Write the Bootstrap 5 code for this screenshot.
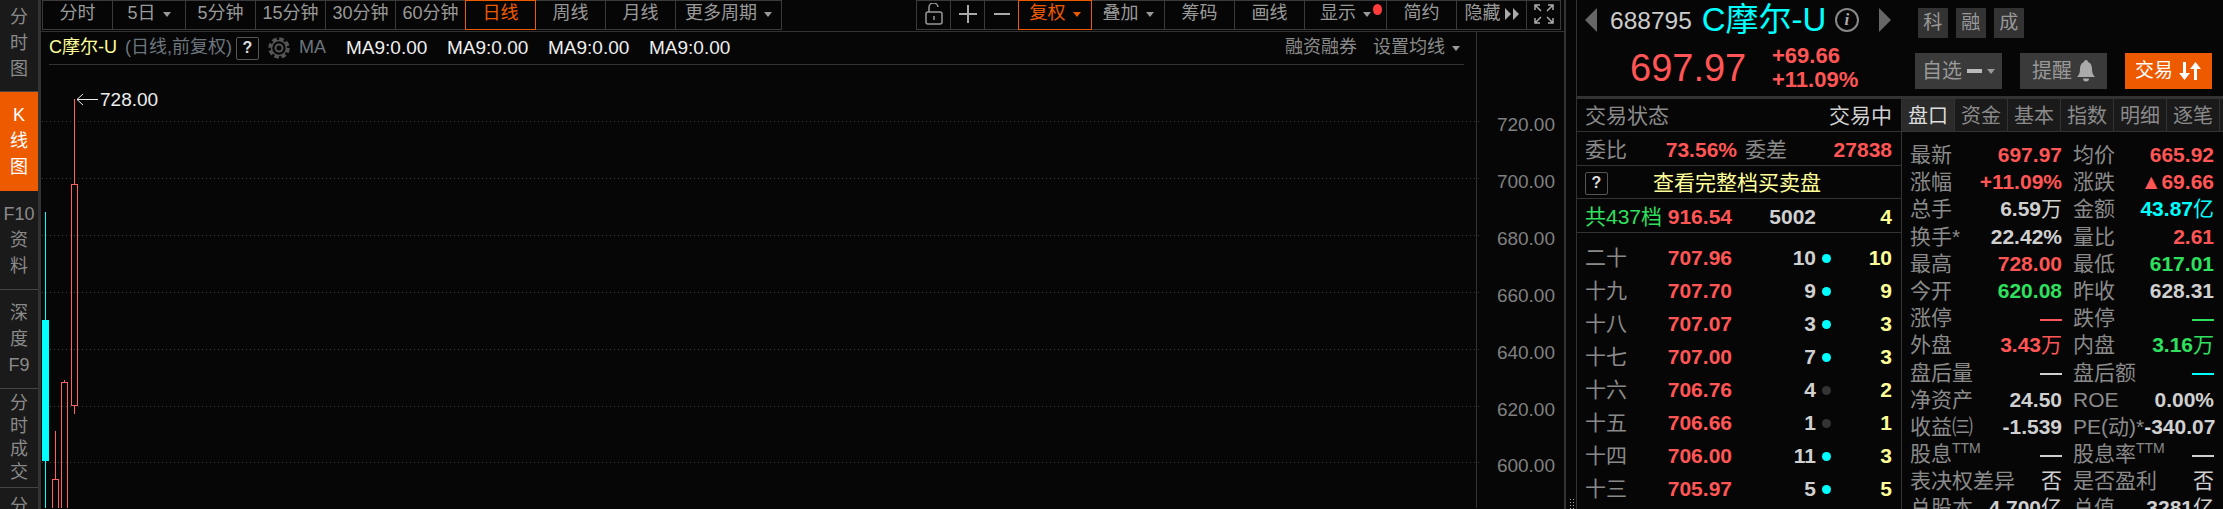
<!DOCTYPE html>
<html lang="zh-CN">
<head>
    <meta charset="UTF-8">
    <meta name="viewport" content="width=device-width, initial-scale=1.0">
    <title>C摩尔-U 688795</title>
    <link href="https://cdn.jsdelivr.net/npm/bootstrap@5.3.0/dist/css/bootstrap.min.css" rel="stylesheet">
    <style>
        html, body { height: 509px; overflow: hidden; }
        body {
            background-color: #060606;
            color: #8a8a8a;
            font-family: "Liberation Sans", "Noto Sans CJK SC", sans-serif;
            font-size: 20px;
            line-height: 1.2;
        }
        .up { color: #ff5555; }
        .down { color: #2fe05f; }
        .cyan { color: #00ffff; }
        .pale { color: #d0d0d0; }
        .yellow { color: #ffff99; }
        .num { font-weight: 700; }
        .unit { font-weight: 400; }

        /* left rail */
        .rail { width: 41px; height: 509px; background: #1a1a1a; border-right: 3px solid #333; flex: none; overflow: hidden; }
        .rail-tab {
            height: 99px; width: 38px; border-bottom: 1px solid #444; flex: none;
            font-size: 18px; line-height: 26px; text-align: center;
        }
        .rail-tab.first { height: 92px; padding-bottom: 6px; }
        .rail-tab.tight { line-height: 23px; }
        .rail-tab.on { background: #ee5a00; color: #fff; border-bottom-color: #ee5a00; }
        .rail-tab.cut { height: 21px; border-bottom: 0; padding-top: 6px; line-height: 24px; }

        /* toolbar */
        .main-col { width: 1523px; flex: none; }
        .tools { height: 32px; padding-left: 1px; border-bottom: 1px solid #333; }
        .tool {
            width: 71px; height: 30px; border: 1px solid #3a3a3a; margin-right: -1px;
            font-size: 18px; color: #999; white-space: nowrap; background: none; padding: 0 0 2px;
            position: relative;
        }
        .tool.wide { width: 74px; }
        .tool.wider { width: 83px; }
        .tool.widest { width: 107px; }
        .tool.slim { width: 35px; }
        .tool.on { border-color: #ee5a00; color: #ee5a00; z-index: 1; }
        .caret-d {
            display: inline-block; width: 0; height: 0; margin-left: 7px;
            border-left: 4px solid transparent; border-right: 4px solid transparent; border-top: 5px solid #999;
        }
        .on .caret-d { border-top-color: #ee5a00; }
        .red-dot { position: absolute; top: 3px; right: 4px; width: 9px; height: 11px; border-radius: 50%; background: #ff3b3b; }

        /* legend */
        .legend-wrap { width: 1436px; border-right: 1px solid #333; }
        .legend {
            height: 33px; margin: 0 12px 0 8px; border-bottom: 1px solid #333;
            font-size: 18px; white-space: nowrap;
        }
        .qmark {
            display: inline-flex; align-items: center; justify-content: center;
            width: 23px; height: 23px; border: 1px solid #555; border-radius: 2px;
            color: #ddd; font-weight: 700; font-size: 16px;
        }
        .ma-label { margin: 0 20px 0 8px; }
        .ma-item { color: #eee; width: 101px; font-size: 19px; padding-top: 1px; }
        .chart { display: block; }
        .chart text { font-family: "Liberation Sans", sans-serif; font-size: 19px; }

        /* splitter */
        .splitter { width: 12px; height: 509px; border-left: 2px solid #333; flex: none; padding: 498px 0 0 3px; }
        .grip { width: 7px; height: 11px; background-image: radial-gradient(#aaa 1px, transparent 1px); background-size: 3px 3px; }

        /* right panel */
        .panel { width: 647px; height: 509px; border-left: 1px solid #333; flex: none; overflow: hidden; font-size: 21px; }
        .head { height: 102px; border-bottom: 3px solid #333; padding-left: 8px; }
        .head-top { height: 46px; }
        .tri-l { width: 0; height: 0; border-top: 12px solid transparent; border-bottom: 12px solid transparent; border-right: 12px solid #666; margin-top: -6px; }
        .tri-r { width: 0; height: 0; border-top: 12px solid transparent; border-bottom: 12px solid transparent; border-left: 12px solid #666; margin-top: -6px; }
        .code { margin: -5px 0 0 13px; font-size: 24.5px; color: #ccc; }
        .name { margin: -6px 0 0 10px; font-size: 33px; width: 133px; white-space: nowrap; }
        .info {
            width: 24px; height: 24px; border: 2px solid #888; border-radius: 50%; color: #aaa; margin-top: -6px;
            font: italic 700 17px/20px "Liberation Serif", serif; text-align: center;
        }
        .tri-r.gap { margin-left: 20px; margin-right: 27px; }
        .tag { width: 30px; height: 30px; background: #333; color: #999; font-size: 19px; margin-right: 8px; }
        .head-bot { padding-left: 45px; height: 50px; }
        .big-price { font-size: 38px; width: 142px; line-height: 1; flex: none; margin-top: -6px; }
        .chg { width: 143px; font-size: 22px; line-height: 24px; font-weight: 700; margin-top: -6px; flex: none; }
        .act {
            width: 87px; height: 36px; margin-right: 18px; background: #3a3a3a; color: #999; font-size: 20px;
            border: 0; border-radius: 0; padding: 0; gap: 5px; flex: none;
        }
        .act.trade { background: #ee5a00; color: #fff; font-size: 19px; }
        .act .caret-d { margin-left: 0; }

        .book { width: 324px; flex: none; }
        .book-row { border-bottom: 1px solid #333; padding: 2px 9px 0 8px; white-space: nowrap; }
        .book-grid { display: grid; grid-template-columns: 81px 66px 84px 20px 56px; align-items: center; text-align: right; }
        .book-grid > :first-child { text-align: left; }
        .book-line { height: 33px; padding: 1px 9px 0 8px; }
        .half-cell { width: 152px; }
        .buy-link { margin-left: 45px; }
        .dot { width: 9px; height: 9px; border-radius: 50%; background: #00ffff; margin: 0 auto; }
        .dot.dim { background: #333; }

        .quote { width: 322px; flex: none; border-left: 1px solid #333; }
        .tabs-row { height: 33px; background: #1a1a1a; border-bottom: 1px solid #333; font-size: 20px; }
        .q-tab { width: 53px; border-right: 1px solid #333; color: #8a8a8a; padding-top: 2px; }
        .q-tab.on { background: #2b2b2b; color: #ddd; }
        .q-rows { padding: 9px 9px 0 8px; display: grid; grid-template-columns: 152px 141px; column-gap: 11px; grid-auto-rows: 27.2px; white-space: nowrap; }
        .dash { display: inline-block; width: 22px; height: 2px; background: currentColor; vertical-align: middle; }
        .q-rows sup { font-size: 14px; top: -.6em; }
    </style>
</head>
<body class="d-flex">

    <div class="rail d-flex flex-column">
        <div class="rail-tab first d-flex flex-column justify-content-center"><span>分</span><span>时</span><span>图</span></div>
        <div class="rail-tab on d-flex flex-column justify-content-center"><span>K</span><span>线</span><span>图</span></div>
        <div class="rail-tab d-flex flex-column justify-content-center"><span>F10</span><span>资</span><span>料</span></div>
        <div class="rail-tab d-flex flex-column justify-content-center"><span>深</span><span>度</span><span>F9</span></div>
        <div class="rail-tab tight d-flex flex-column justify-content-center"><span>分</span><span>时</span><span>成</span><span>交</span></div>
        <div class="rail-tab cut">分</div>
    </div>

    <div class="main-col d-flex flex-column">
        <div class="tools d-flex justify-content-between">
            <div class="d-flex">
                <div class="tool d-flex align-items-center justify-content-center">分时</div>
                <div class="tool wide d-flex align-items-center justify-content-center">5日<span class="caret-d"></span></div>
                <div class="tool d-flex align-items-center justify-content-center">5分钟</div>
                <div class="tool d-flex align-items-center justify-content-center">15分钟</div>
                <div class="tool d-flex align-items-center justify-content-center">30分钟</div>
                <div class="tool d-flex align-items-center justify-content-center">60分钟</div>
                <div class="tool on d-flex align-items-center justify-content-center">日线</div>
                <div class="tool d-flex align-items-center justify-content-center">周线</div>
                <div class="tool d-flex align-items-center justify-content-center">月线</div>
                <div class="tool widest d-flex align-items-center justify-content-center">更多周期<span class="caret-d"></span></div>
            </div>
            <div class="d-flex me-1">
                <div class="tool slim d-flex align-items-center justify-content-center">
                    <svg width="20" height="22" viewBox="0 0 20 22" fill="none" stroke="#999" stroke-width="1.5"><rect x="2" y="9" width="16" height="12" rx="2"/><path d="M5 9V5a4.500 4.500 0 0 1 9-1"/><path d="M10 13v4"/></svg>
                </div>
                <div class="tool slim d-flex align-items-center justify-content-center">
                    <svg width="18" height="18" viewBox="0 0 18 18" stroke="#aaa" stroke-width="2"><path d="M0 9h18M9 0v18"/></svg>
                </div>
                <div class="tool slim d-flex align-items-center justify-content-center">
                    <svg width="18" height="18" viewBox="0 0 18 18" stroke="#aaa" stroke-width="2"><path d="M1 9h16"/></svg>
                </div>
                <div class="tool wide on d-flex align-items-center justify-content-center">复权<span class="caret-d"></span></div>
                <div class="tool wide d-flex align-items-center justify-content-center">叠加<span class="caret-d"></span></div>
                <div class="tool d-flex align-items-center justify-content-center">筹码</div>
                <div class="tool d-flex align-items-center justify-content-center">画线</div>
                <div class="tool wider d-flex align-items-center justify-content-center">显示<span class="caret-d"></span><span class="red-dot"></span></div>
                <div class="tool d-flex align-items-center justify-content-center">简约</div>
                <div class="tool d-flex align-items-center justify-content-center">隐藏
                    <svg class="ms-1" width="14" height="12" viewBox="0 0 14 12" fill="#aaa"><path d="M0 0l6 6-6 6zM8 0l6 6-6 6z"/></svg>
                </div>
                <div class="tool slim d-flex align-items-center justify-content-center">
                    <svg width="22" height="22" viewBox="0 0 22 22" fill="none" stroke="#aaa" stroke-width="1.500"><path d="M2 7V2h5M2 2l6 6M15 2h5v5M20 2l-6 6M2 15v5h5M2 20l6-6M20 15v5h-5M20 20l-6-6"/></svg>
                </div>
            </div>
        </div>

        <div class="legend-wrap">
            <div class="legend d-flex align-items-center">
                <span class="yellow">C摩尔-U</span>
                <span class="ms-2 text-secondary">(日线,前复权)</span>
                <span class="qmark ms-1">?</span>
                <svg class="ms-2" width="24" height="24" viewBox="0 0 24 24" fill="none" stroke="#555">
                    <circle cx="12" cy="12" r="9" stroke-width="3.500" stroke-dasharray="4.500 2.570"/>
                    <circle cx="12" cy="12" r="7.500" stroke-width="1.500"/>
                    <circle cx="12" cy="12" r="3.500" stroke-width="2"/>
                </svg>
                <span class="ma-label text-secondary">MA</span>
                <span class="ma-item">MA9:0.00</span>
                <span class="ma-item">MA9:0.00</span>
                <span class="ma-item">MA9:0.00</span>
                <span class="ma-item">MA9:0.00</span>
                <span class="ms-auto">融资融券</span>
                <span class="ms-3">设置均线</span>
                <span class="caret-d me-1"></span>
            </div>
        </div>

        <svg class="chart" id="chart" width="1523" height="443" viewBox="41 66 1523 443"></svg>
    </div>

    <div class="splitter"><div class="grip"></div></div>

    <div class="panel d-flex flex-column">
        <div class="head">
            <div class="head-top d-flex align-items-center">
                <span class="tri-l"></span>
                <span class="code">688795</span>
                <span class="name cyan">C摩尔-U</span>
                <span class="info">i</span>
                <span class="tri-r gap"></span>
                <span class="tag d-flex align-items-center justify-content-center">科</span>
                <span class="tag d-flex align-items-center justify-content-center">融</span>
                <span class="tag d-flex align-items-center justify-content-center">成</span>
            </div>
            <div class="head-bot d-flex align-items-center">
                <span class="big-price up">697.97</span>
                <div class="chg up"><div>+69.66</div><div>+11.09%</div></div>
                <button class="act btn d-flex align-items-center justify-content-center">自选
                    <svg width="15" height="4" viewBox="0 0 15 4" fill="#bbb"><rect width="15" height="4"/></svg>
                    <span class="caret-d"></span>
                </button>
                <button class="act btn d-flex align-items-center justify-content-center">提醒
                    <svg width="18" height="22" viewBox="0 0 18 22" fill="#aaa"><path d="M9 0a2 2 0 0 1 2 2c3 1 4 4 4 7 0 4 1 6 3 8H0c2-2 3-4 3-8 0-3 1-6 4-7a2 2 0 0 1 2-2zM6 18.500h6a3 3 0 0 1-6 0z"/></svg>
                </button>
                <button class="act trade btn d-flex align-items-center justify-content-center">交易
                    <svg width="24" height="18" viewBox="0 0 24 18" fill="#fff"><path d="M5 0h3v11h4l-5.500 7L1 11h4zM16 7h-4l5.500-7L23 7h-4v11h-3z"/></svg>
                </button>
            </div>
        </div>

        <div class="d-flex flex-grow-1">
            <div class="book">
                <div class="book-row d-flex justify-content-between align-items-center" style="height:33px">
                    <span>交易状态</span><span class="pale">交易中</span>
                </div>
                <div class="book-row d-flex align-items-center" style="height:34px">
                    <div class="half-cell d-flex justify-content-between"><span>委比</span><span class="up num">73.56%</span></div>
                    <div class="d-flex justify-content-between flex-grow-1 ms-2"><span>委差</span><span class="up num">27838</span></div>
                </div>
                <div class="book-row d-flex align-items-center" style="height:33px">
                    <span class="qmark">?</span>
                    <span class="yellow buy-link">查看完整档买卖盘</span>
                </div>
                <div class="book-row book-grid" style="height:34px">
                    <span class="down">共437档</span><span class="up num">916.54</span><span class="pale num">5002</span><span></span><span class="yellow num">4</span>
                </div>
                <div id="levels" class="pt-2"></div>
            </div>

            <div class="quote">
                <div class="tabs-row d-flex">
                    <div class="q-tab on d-flex align-items-center justify-content-center">盘口</div>
                    <div class="q-tab d-flex align-items-center justify-content-center">资金</div>
                    <div class="q-tab d-flex align-items-center justify-content-center">基本</div>
                    <div class="q-tab d-flex align-items-center justify-content-center">指数</div>
                    <div class="q-tab d-flex align-items-center justify-content-center">明细</div>
                    <div class="q-tab d-flex align-items-center justify-content-center">逐笔</div>
                </div>
                <div class="q-rows" id="quotes"></div>
            </div>
        </div>
    </div>

    <script>
        // order book levels: label, price, volume, dot on/off, last column
        const levels = [
            ['二十', '707.96', 10, 1, 10],
            ['十九', '707.70', 9, 1, 9],
            ['十八', '707.07', 3, 1, 3],
            ['十七', '707.00', 7, 1, 3],
            ['十六', '706.76', 4, 0, 2],
            ['十五', '706.66', 1, 0, 1],
            ['十四', '706.00', 11, 1, 3],
            ['十三', '705.97', 5, 1, 5]
        ];
        document.getElementById('levels').innerHTML = levels.map(l => `
            <div class="book-grid book-line">
                <span>${l[0]}</span>
                <span class="up num">${l[1]}</span>
                <span class="pale num">${l[2]}</span>
                <span class="dot ${l[3] ? '' : 'dim'}"></span>
                <span class="yellow num">${l[4]}</span>
            </div>`).join('');

        const dash = '<span class="dash"></span>';
        const wan = '<span class="unit">万</span>';
        const yi = '<span class="unit">亿</span>';
        const quotes = [
            ['最新', '697.97', 'up'], ['均价', '665.92', 'up'],
            ['涨幅', '+11.09%', 'up'], ['涨跌', '▲69.66', 'up'],
            ['总手', '6.59' + wan, 'pale'], ['金额', '43.87' + yi, 'cyan'],
            ['换手*', '22.42%', 'pale'], ['量比', '2.61', 'up'],
            ['最高', '728.00', 'up'], ['最低', '617.01', 'down'],
            ['今开', '620.08', 'down'], ['昨收', '628.31', 'pale'],
            ['涨停', dash, 'up'], ['跌停', dash, 'down'],
            ['外盘', '3.43' + wan, 'up'], ['内盘', '3.16' + wan, 'down'],
            ['盘后量', dash, 'pale'], ['盘后额', dash, 'cyan'],
            ['净资产', '24.50', 'pale'], ['ROE', '0.00%', 'pale'],
            ['收益㈢', '-1.539', 'pale'], ['PE(动)*', '-340.07', 'pale'],
            ['股息<sup>TTM</sup>', dash, 'pale'], ['股息率<sup>TTM</sup>', dash, 'pale'],
            ['表决权差异', '<span class="unit">否</span>', 'pale'], ['是否盈利', '<span class="unit">否</span>', 'pale'],
            ['总股本', '4.700' + yi, 'pale'], ['总值', '3281' + yi, 'pale']
        ];
        document.getElementById('quotes').innerHTML = quotes.map(q => `
            <div class="d-flex justify-content-between align-items-center">
                <span>${q[0]}</span><span class="num ${q[2]}">${q[1]}</span>
            </div>`).join('');

        // chart is drawn in page coordinates, the viewBox takes care of the offset
        const red = '#ff6060';
        let svg = '';
        const grid = [[122, '720.00'], [179, '700.00'], [236, '680.00'], [293, '660.00'], [350, '640.00'], [407, '620.00'], [463, '600.00']];
        grid.forEach(g => {
            svg += `<line x1="42" x2="1481" y1="${g[0] + .5}" y2="${g[0] + .5}" stroke="#3c3c3c" stroke-dasharray="1 3"/>`;
            svg += `<text x="1555" y="${g[0] + 10}" text-anchor="end" fill="#808080">${g[1]}</text>`;
        });
        // cyan candle
        svg += `<line x1="45.500" x2="45.500" y1="213" y2="509" stroke="#00ffff"/>`;
        svg += `<rect x="42" y="321" width="7" height="141" fill="#00ffff"/>`;
        // hollow red candles: x, body top, body bottom, wick top, wick bottom
        [[52.5, 480, 520, 432, 520], [61.5, 383, 520, 381, 520], [71.5, 185, 406, 100, 415]].forEach(c => {
            const mid = c[0] + 3;
            svg += `<line x1="${mid}" x2="${mid}" y1="${c[3]}" y2="${c[1]}" stroke="${red}"/>`;
            svg += `<line x1="${mid}" x2="${mid}" y1="${c[2]}" y2="${c[4]}" stroke="${red}"/>`;
            svg += `<rect x="${c[0]}" y="${c[1] + .5}" width="6" height="${c[2] - c[1]}" fill="none" stroke="${red}"/>`;
        });
        // high price marker
        svg += `<path d="M98 100.500H77M83 95l-6 5.500 6 5.500" fill="none" stroke="#eee"/>`;
        svg += `<text x="100" y="107" fill="#eee">728.00</text>`;
        svg += `<line x1="1476.500" x2="1476.500" y1="66" y2="509" stroke="#333"/>`;
        document.getElementById('chart').innerHTML = svg;
    </script>
    <script src="https://cdn.jsdelivr.net/npm/bootstrap@5.3.0/dist/js/bootstrap.bundle.min.js"></script>
</body>
</html>
